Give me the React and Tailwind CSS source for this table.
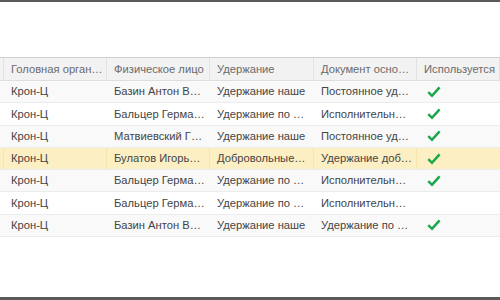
const cols = ['w-[103px]', 'w-[103px]', 'w-[104px]', 'w-[103px]', 'flex-1'];

const header = ['Головная орган…', 'Физическое лицо', 'Удержание', 'Документ осно…', 'Используется'];

const rows = [
  { cells: ['Крон-Ц', 'Базин Антон В…', 'Удержание наше', 'Постоянное уд…'], used: true },
  { cells: ['Крон-Ц', 'Бальцер Герма…', 'Удержание по …', 'Исполнительн…'], used: true },
  { cells: ['Крон-Ц', 'Матвиевский Г…', 'Удержание наше', 'Постоянное уд…'], used: true },
  { cells: ['Крон-Ц', 'Булатов Игорь…', 'Добровольные…', 'Удержание доб…'], used: true, selected: true },
  { cells: ['Крон-Ц', 'Бальцер Герма…', 'Удержание по …', 'Исполнительн…'], used: true },
  { cells: ['Крон-Ц', 'Бальцер Герма…', 'Удержание по …', 'Исполнительн…'], used: false },
  { cells: ['Крон-Ц', 'Базин Антон В…', 'Удержание наше', 'Удержание по …'], used: true },
];

function Check() {
  return (
    <svg width="14" height="12" viewBox="0 0 14 12" className="ml-[3px]">
      <path d="M1.3 6.2 L5 9.8 L12.6 1.4" fill="none" stroke="#1aa64a" strokeWidth="2.5" />
    </svg>
  );
}

export default function App() {
  return (
    <div
      className="flex h-[300px] w-[500px] flex-col overflow-hidden bg-white text-[11.2px]"
      style={{ fontFamily: '"Liberation Sans", Arial, sans-serif' }}
    >
      <div className="h-[2px] bg-[#5a5a5a]" />
      <div className="h-[55px]" />

      <div className="flex h-[24px] items-center border-y border-t-[#cfcfcf] border-b-[#dedede] bg-[#f2f2f2] text-[#6a6a6a]">
        <div className="h-full w-[4px] border-r border-[#e2e2e2]" />
        {header.map((h, i) => (
          <div
            key={i}
            className={`${cols[i]} flex h-full items-center border-r border-[#e2e2e2] pl-[7px] whitespace-nowrap`}
          >
            {h}
          </div>
        ))}
      </div>

      {rows.map((r, i) => (
        <div
          key={i}
          className={`flex h-[22.3px] items-center border-b border-[#ececec] text-[#444] ${
            r.selected ? 'bg-[#fcefc4]' : i % 2 === 0 ? 'bg-[#f9f9f9]' : 'bg-white'
          }`}
        >
          <div className={`h-full w-[4px] border-r ${r.selected ? 'border-[#f6e4ac]' : 'border-transparent'}`} />
          {r.cells.map((c, j) => (
            <div
              key={j}
              className={`${cols[j]} flex h-full items-center border-r pl-[7px] whitespace-nowrap ${
                r.selected ? 'border-[#f6e4ac]' : 'border-transparent'
              }`}
            >
              {c}
            </div>
          ))}
          <div className="flex h-full flex-1 items-center pl-[7px]">{r.used ? <Check /> : null}</div>
        </div>
      ))}

      <div className="flex-1" />
      <div className="h-[3px] bg-[#5a5a5a]" />
    </div>
  );
}
